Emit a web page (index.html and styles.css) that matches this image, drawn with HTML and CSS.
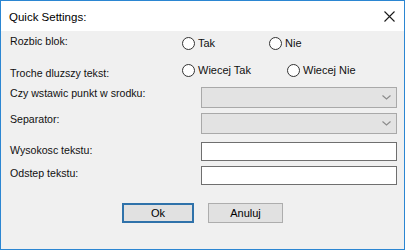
FILE: index.html
```html
<!DOCTYPE html>
<html lang="pl">
<head>
<meta charset="utf-8">
<title>Quick Settings</title>
<link rel="stylesheet" href="styles.css">
</head>
<body>
<div class="window">
  <div class="titlebar">
    <span class="title">Quick Settings:</span>
    <svg class="close" width="11" height="11" viewBox="0 0 11 11"><path d="M0.5 0.5 L10.5 10.5 M10.5 0.5 L0.5 10.5" stroke="#1a1a1a" stroke-width="1.1" fill="none"/></svg>
  </div>
  <div class="content">
    <div class="row row-a">
      <span class="lbl lbl-radio">Rozbic blok:</span>
      <div class="radios radios-a">
        <span class="radio"><span class="circle"></span>Tak</span>
        <span class="radio"><span class="circle"></span>Nie</span>
      </div>
    </div>
    <div class="row row-b">
      <span class="lbl lbl-radio">Troche dluzszy tekst:</span>
      <div class="radios radios-b">
        <span class="radio"><span class="circle"></span>Wiecej Tak</span>
        <span class="radio"><span class="circle"></span>Wiecej Nie</span>
      </div>
    </div>
    <div class="row row-c">
      <span class="lbl">Czy wstawic punkt w srodku:</span>
      <div class="combo"><svg width="9" height="5" viewBox="0 0 9 5"><path d="M0.5 0.5 L4.5 4 L8.5 0.5" stroke="#8a8a8a" stroke-width="1.1" fill="none"/></svg></div>
    </div>
    <div class="row row-d">
      <span class="lbl">Separator:</span>
      <div class="combo"><svg width="9" height="5" viewBox="0 0 9 5"><path d="M0.5 0.5 L4.5 4 L8.5 0.5" stroke="#8a8a8a" stroke-width="1.1" fill="none"/></svg></div>
    </div>
    <div class="row row-e">
      <span class="lbl">Wysokosc tekstu:</span>
      <div class="textbox"></div>
    </div>
    <div class="row row-f">
      <span class="lbl">Odstep tekstu:</span>
      <div class="textbox"></div>
    </div>
    <div class="buttons">
      <button class="btn btn-default">Ok</button>
      <button class="btn">Anuluj</button>
    </div>
  </div>
</div>
</body>
</html>
```
FILE: styles.css
```css
html, body {
  margin: 0;
  padding: 0;
  background: #fff;
}
body {
  font-family: "Liberation Sans", Arial, sans-serif;
  font-size: 11px;
  color: #000;
}
.window {
  width: 405px;
  height: 250px;
  box-sizing: border-box;
  border: 1px solid #2b86d2;
  background: #f0f0f0;
  display: flex;
  flex-direction: column;
}
.titlebar {
  height: 30px;
  flex: none;
  background: #fff;
  display: flex;
  align-items: center;
  justify-content: space-between;
  padding: 0 9px 0 8px;
}
.title {
  font-size: 11.5px;
  color: #000;
  margin-top: 1px;
}
.close {
  display: block;
}
.content {
  padding: 0 7px 0 9px;
  display: flex;
  flex-direction: column;
}
.row {
  display: flex;
  align-items: flex-start;
}
.lbl {
  width: 191px;
  flex: none;
  font-size: 10.6px;
  line-height: 13px;
  color: #111;
  white-space: nowrap;
}
.lbl-radio {
  width: 172px;
}
.row-a { height: 26px; }
.row-a .lbl { margin-top: 4px; }
.row-a .radios { margin-top: 6px; }
.row-b { height: 26px; }
.row-b .lbl { margin-top: 10px; }
.row-b .radios { margin-top: 7px; }
.row-c { height: 26px; }
.row-c .lbl, .row-c .combo { margin-top: 4px; }
.row-d { height: 29px; }
.row-d .lbl, .row-d .combo { margin-top: 4px; }
.row-e { height: 24px; }
.row-e .lbl { margin-top: 6px; }
.row-e .textbox { margin-top: 4px; }
.row-f { height: 24px; }
.row-f .lbl { margin-top: 5px; }
.row-f .textbox { margin-top: 4px; }

.radios {
  display: grid;
  align-items: center;
}
.radios-a { grid-template-columns: 87px auto; }
.radios-b { grid-template-columns: 105px auto; }
.radio {
  display: inline-flex;
  align-items: center;
  gap: 3px;
  line-height: 13px;
  color: #111;
  white-space: nowrap;
}
.circle {
  width: 13px;
  height: 13px;
  box-sizing: border-box;
  border: 1px solid #333;
  border-radius: 50%;
  background: #fff;
  flex: none;
}
.combo {
  width: 196px;
  height: 21px;
  box-sizing: border-box;
  border: 1px solid #a9a9a9;
  background: #e3e3e3;
  display: flex;
  align-items: center;
  justify-content: flex-end;
  padding-right: 5px;
}
.combo svg {
  display: block;
}
.textbox {
  width: 197px;
  height: 19px;
  box-sizing: border-box;
  border: 1px solid #6f6f6f;
  background: #fff;
}
.buttons {
  display: flex;
  gap: 14px;
  margin-top: 17px;
  padding-left: 112px;
}
.btn {
  width: 75px;
  height: 20px;
  box-sizing: border-box;
  border: 1px solid #adadad;
  background: #e1e1e1;
  font-family: "Liberation Sans", Arial, sans-serif;
  font-size: 11px;
  color: #000;
  padding: 0;
  margin: 0;
  line-height: 16px;
}
.btn-default {
  width: 72px;
  border: 2px solid #2f72aa;
}
```
